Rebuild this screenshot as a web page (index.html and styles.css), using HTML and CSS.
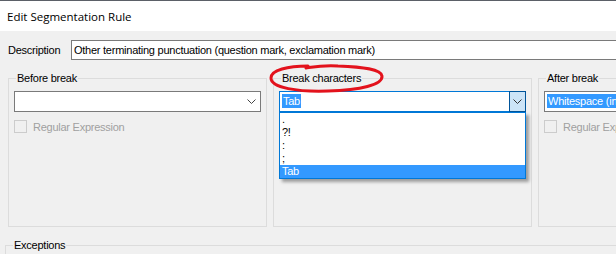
FILE: index.html
```html
<!DOCTYPE html>
<html lang="en">

<head>
    <meta charset="UTF-8">
    <title>Edit Segmentation Rule</title>
    <link rel="stylesheet" href="styles.css">
</head>

<body>
    <div class="titlebar">Edit Segmentation Rule</div>

    <div class="dialog">
        <div class="descRow">
            <span class="descLabel">Description</span>
            <div class="textbox">Other terminating punctuation (question mark, exclamation mark)</div>
        </div>

        <div class="groups">
            <fieldset class="group">
                <legend>Before break</legend>
                <div class="combo">
                    <span class="comboText"></span>
                    <span class="arrow">
                        <svg width="9" height="5" viewBox="0 0 9 5"><polyline points="0.5,0.5 4.5,4.5 8.5,0.5" fill="none" stroke="#444" stroke-width="1"/></svg>
                    </span>
                </div>
                <div class="check"><span class="box"></span>Regular Expression</div>
            </fieldset>

            <fieldset class="group breakGroup">
                <legend>Break characters</legend>
                <svg class="circle" width="118" height="32" viewBox="0 0 118 32">
                    <path d="M40 3 C20 3 3 7 3 15 C3 25 30 29 60 28 C92 27 115 22 114 13 C113 6 95 4 70 3 C55 2 45 4 38 5" fill="none" stroke="#e3121c" stroke-width="3" stroke-linecap="round"/>
                </svg>
                <div class="combo focused">
                    <span class="comboText"><span class="sel">Tab</span></span>
                    <span class="arrow btnHot">
                        <svg width="9" height="5" viewBox="0 0 9 5"><polyline points="0.5,0.5 4.5,4.5 8.5,0.5" fill="none" stroke="#333" stroke-width="1"/></svg>
                    </span>
                    <div class="dropList">
                        <div class="item">.</div>
                        <div class="item">?!</div>
                        <div class="item">:</div>
                        <div class="item">;</div>
                        <div class="item active">Tab</div>
                    </div>
                </div>
                <div class="check"><span class="box"></span>Regular Expression</div>
            </fieldset>

            <fieldset class="group">
                <legend>After break</legend>
                <div class="combo">
                    <span class="comboText"><span class="sel">Whitespace (including tabs and line breaks)</span></span>
                </div>
                <div class="check"><span class="box"></span>Regular Expression</div>
            </fieldset>
        </div>

        <fieldset class="group exceptions">
            <legend>Exceptions</legend>
        </fieldset>
    </div>
</body>

</html>
```

FILE: styles.css
```css
html, body {
    margin: 0;
    width: 616px;
    height: 254px;
    overflow: hidden;
}

body {
    background-color: #f0f0f0;
    font-family: "Liberation Sans", Arial, sans-serif;
    font-size: 11px;
    letter-spacing: -0.25px;
    color: #000;
}

.titlebar {
    height: 30px;
    background-color: #fff;
    border-top: 1px solid #5b6067;
    font-family: "Open Sans", "Noto Sans", sans-serif;
    font-size: 11.5px;
    letter-spacing: 0;
    line-height: 31px;
    padding-left: 7px;
    color: #000;
}

.dialog {
    padding-left: 5px;
}

.descRow {
    display: flex;
    align-items: center;
    margin-top: 9px;
    padding-left: 3px;
}

.descLabel {
    width: 63px;
}

.textbox {
    flex: 1;
    height: 20px;
    box-sizing: border-box;
    border: 1px solid #7a7a7a;
    border-right: none;
    background-color: #fff;
    line-height: 18px;
    padding-left: 2px;
    white-space: nowrap;
}

.groups {
    display: flex;
    gap: 6px;
    margin-top: 12px;
    padding-left: 3px;
}

.group {
    flex: none;
    width: 258px;
    height: 155px;
    box-sizing: border-box;
    margin: 0;
    padding: 6px 5px 0;
    border: 1px solid #dcdcdc;
    position: relative;
}

.group legend {
    margin-left: 2px;
    padding: 0 1px;
    line-height: 13px;
}

.combo {
    position: relative;
    height: 21px;
    width: 247px;
    box-sizing: border-box;
    border: 1px solid #7a7a7a;
    background-color: #fff;
    display: flex;
    align-items: center;
}

.combo.focused {
    border-color: #0078d7;
}

.comboText {
    flex: 1;
    padding-left: 2px;
    white-space: nowrap;
    overflow: hidden;
    line-height: 15px;
}

.sel {
    background-color: #3399ff;
    color: #fff;
    padding: 1px;
}

.arrow {
    width: 17px;
    height: 19px;
    display: flex;
    align-items: center;
    justify-content: center;
}

.btnHot {
    box-sizing: border-box;
    height: 21px;
    margin: -1px -1px -1px 0;
    border: 1px solid #005499;
    background-color: #cce4f7;
}

.dropList {
    position: absolute;
    left: -1px;
    top: 20px;
    width: 247px;
    box-sizing: border-box;
    border: 1px solid #0078d7;
    background-color: #fff;
    box-shadow: 3px 3px 3px rgba(0, 0, 0, 0.35);
    z-index: 2;
}

.item {
    height: 13px;
    line-height: 13px;
    padding-left: 2px;
}

.item.active {
    background-color: #3399ff;
    color: #fff;
}

.check {
    display: flex;
    align-items: center;
    margin-top: 8px;
    color: #a0a0a0;
}

.box {
    width: 13px;
    height: 13px;
    box-sizing: border-box;
    border: 1px solid #cccccc;
    margin-right: 6px;
}

.circle {
    position: absolute;
    left: -6px;
    top: -22px;
    z-index: 1;
}

.exceptions {
    width: 640px;
    margin-top: 12px;
    height: 40px;
}
```
